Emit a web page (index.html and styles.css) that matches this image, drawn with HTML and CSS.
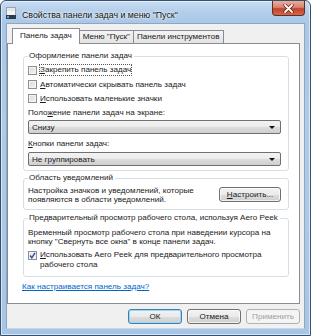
FILE: index.html
```html
<!DOCTYPE html>
<html lang="ru">
<head>
<meta charset="utf-8">
<link rel="stylesheet" href="styles.css">
</head>
<body>
<div class="window">
  <div class="titlebar">
    <svg class="app-icon" width="10" height="12" viewBox="0 0 10 12">
      <rect x="0.5" y="0.5" width="9" height="11" fill="#f4f4f4" stroke="#9aa4ae"/>
      <rect x="1" y="1" width="8" height="3" fill="#dfe7ef"/>
      <rect x="0" y="8" width="10" height="4" fill="#2d3a47"/>
      <rect x="1" y="9" width="2" height="2" fill="#6aa0d8"/>
    </svg>
    <span class="title">Свойства панели задач и меню "Пуск"</span>
    <div class="close">
      <svg width="11" height="9" viewBox="0 0 11 9">
        <path d="M2 1 L9 8 M9 1 L2 8" stroke="#5a1a10" stroke-width="3.2" stroke-linecap="round"/>
        <path d="M2 1 L9 8 M9 1 L2 8" stroke="#ffffff" stroke-width="1.8" stroke-linecap="round"/>
      </svg>
    </div>
  </div>
  <div class="client">
    <div class="tabs">
      <div class="tab active">Панель задач</div>
      <div class="tab">Меню "Пуск"</div>
      <div class="tab">Панели инструментов</div>
    </div>
    <div class="panel">
      <fieldset class="group g1">
        <legend>Оформление панели задач</legend>
        <div class="check"><span class="box"></span><span class="focus"><u>З</u>акрепить панель задач</span></div>
        <div class="check"><span class="box"></span><span><u>А</u>втоматически скрывать панель задач</span></div>
        <div class="check"><span class="box"></span><span><u>И</u>спользовать маленькие значки</span></div>
        <div class="caption">Поло<u>ж</u>ение панели задач на экране:</div>
        <div class="select"><span>Снизу</span><span class="arrow"></span></div>
        <div class="caption c2"><u>К</u>нопки панели задач:</div>
        <div class="select s2"><span>Не группировать</span><span class="arrow"></span></div>
      </fieldset>
      <fieldset class="group g2">
        <legend>Область уведомлений</legend>
        <div class="notify">
          <div class="desc">Настройка значков и уведомлений, которые<br>появляются в области уведомлений.</div>
          <div class="btn small"><u>Н</u>астроить...</div>
        </div>
      </fieldset>
      <fieldset class="group g3">
        <legend>Предварительный просмотр рабочего стола, используя Aero Peek</legend>
        <div class="desc">Временный просмотр рабочего стола при наведении курсора на<br>кнопку "Свернуть все окна" в конце панели задач.</div>
        <div class="check multi"><span class="box checked"><svg width="7" height="7" viewBox="0 0 7 7"><path d="M1 3.5 L2.8 5.8 L6 0.8" fill="none" stroke="#2a4f9a" stroke-width="1.4"/></svg></span><span><u>И</u>спользовать Aero Peek для предварительного просмотра<br>рабочего стола</span></div>
      </fieldset>
      <div class="link">Как настраивается панель задач?</div>
    </div>
    <div class="buttons">
      <div class="btn default">ОК</div>
      <div class="btn">Отмена</div>
      <div class="btn disabled">Применить</div>
    </div>
  </div>
</div>
</body>
</html>
```
FILE: styles.css
```css
html, body {
  margin: 0;
  padding: 0;
}
body {
  width: 311px;
  height: 336px;
  overflow: hidden;
  background: #ffffff;
  font-family: "Liberation Sans", Arial, sans-serif;
  font-size: 8.1px;
  color: #1a1a1a;
}
u { text-decoration: underline; }

.window {
  box-sizing: border-box;
  width: 311px;
  height: 336px;
  border: 1px solid #34506e;
  border-radius: 6px 6px 0 0;
  background: linear-gradient(to bottom, #c9def3 0px, #b4cfeb 10px, #a9c7e7 22px, #aecbe9 120px, #a7c5e6 336px);
  box-shadow: inset 0 0 0 1px rgba(255,255,255,0.55);
  display: flex;
  flex-direction: column;
  padding: 0 5px 6px 5px;
}

.titlebar {
  height: 22px;
  display: flex;
  align-items: flex-start;
  flex: none;
}
.app-icon {
  margin: 6px 0 0 0;
  flex: none;
}
.title {
  margin: 8px 0 0 6px;
  font-size: 8.8px;
  line-height: 12px;
  color: #111;
  text-shadow: 0 0 4px #fff, 0 0 2px #fff;
}
.close {
  margin-left: auto;
  width: 33px;
  height: 15px;
  box-sizing: border-box;
  border: 1px solid #6b2a20;
  border-top: none;
  border-radius: 0 0 4px 4px;
  background: linear-gradient(to bottom, #e9ae9e 0, #d9836e 45%, #c0432c 55%, #cf6a4c 100%);
  display: flex;
  align-items: center;
  justify-content: center;
}

.client {
  flex: 1;
  background: #f0f0f0;
  border: 1px solid #8ea6c0;
  border-bottom-color: #c8d8e8;
  display: flex;
  flex-direction: column;
  padding: 4px 4px 4px 0;
}

.tabs {
  display: flex;
  align-items: flex-end;
  height: 15px;
  padding-left: 5px;
  position: relative;
  z-index: 1;
}
.tab {
  height: 12px;
  line-height: 12px;
  padding: 0 3px;
  border: 1px solid #898c95;
  border-bottom: none;
  border-left: none;
  background: linear-gradient(to bottom, #f4f4f4, #e3e3e3);
  white-space: nowrap;
}
.tab.active {
  height: 15px;
  line-height: 14px;
  padding: 0 7px;
  border-left: 1px solid #898c95;
  background: #ffffff;
  margin-bottom: -1px;
  margin-right: -1px;
  position: relative;
  z-index: 2;
}
.tab.active + .tab { border-left: 1px solid #898c95; }

.panel {
  box-sizing: border-box;
  height: 261px;
  background: #ffffff;
  border: 1px solid #898c95;
  padding: 7px 10px 0 15px;
  display: flex;
  flex-direction: column;
}

.group {
  margin: 0;
  padding: 0 7px 4px 4px;
  border: 1px solid #d5dfe5;
  border-radius: 3px;
  min-width: 0;
}
.group legend {
  padding: 0 2px 0 1px;
  margin-left: 0;
  line-height: 10px;
  white-space: nowrap;
}
.g1 { padding-top: 2px; }
.g2 { margin-top: 2px; padding-bottom: 5px; padding-top: 0; }
.g3 { margin-top: 3px; padding-top: 5px; padding-bottom: 6px; }

.check {
  display: flex;
  align-items: center;
  height: 14px;
  white-space: nowrap;
}
.box {
  box-sizing: border-box;
  width: 9px;
  height: 9px;
  border: 1px solid #8e8f8f;
  background: linear-gradient(135deg, #d8d8d8, #f6f6f6);
  box-shadow: inset 0 0 0 1px #f4f4f4;
  margin-right: 3px;
  flex: none;
  display: flex;
  align-items: center;
  justify-content: center;
}
.box.checked {
  background: linear-gradient(135deg, #dfe4ea, #f8f9fb);
}
.focus {
  outline: 1px dotted #555;
  outline-offset: 0;
  line-height: 10px;
}
.check.multi {
  height: auto;
  align-items: flex-start;
  margin-top: 4px;
  line-height: 10px;
}
.check.multi .box { margin-top: 1px; }

.caption {
  height: 14px;
  line-height: 14px;
  margin-top: 1px;
}
.caption.c2 {
  margin-top: 4px;
  height: 12px;
  line-height: 12px;
}
.select {
  box-sizing: border-box;
  height: 14px;
  border: 1px solid #707070;
  border-radius: 2px;
  background: linear-gradient(to bottom, #f3f3f3 0, #ebebeb 50%, #dddddd 51%, #cfcfcf 100%);
  display: flex;
  align-items: center;
  justify-content: space-between;
  padding: 0 5px 0 3px;
}
.select.s2 { margin-top: 2px; }
.arrow {
  width: 0;
  height: 0;
  border-left: 3px solid transparent;
  border-right: 3px solid transparent;
  border-top: 3px solid #111;
}

.notify {
  display: flex;
  align-items: flex-start;
  justify-content: space-between;
}
.desc {
  line-height: 9px;
  white-space: nowrap;
  padding-top: 3px;
}
.g3 .desc { padding-top: 0; }

.btn {
  box-sizing: border-box;
  width: 54px;
  height: 15px;
  border: 1px solid #707070;
  border-radius: 3px;
  background: linear-gradient(to bottom, #f2f2f2 0, #ebebeb 50%, #dddddd 51%, #cfcfcf 100%);
  box-shadow: inset 0 0 0 1px rgba(255,255,255,0.7);
  display: flex;
  align-items: center;
  justify-content: center;
  white-space: nowrap;
}
.btn.small {
  width: 62px;
  margin-top: 4px;
}
.btn.default {
  border-color: #3c7fb1;
  box-shadow: inset 0 0 0 1px #9fd5f5;
}
.btn.disabled {
  color: #a0a0a0;
  border-color: #adb2b5;
  background: #f4f4f4;
  box-shadow: none;
}

.link {
  margin-top: 5px;
  margin-left: -1px;
  line-height: 10px;
  color: #0066cc;
  text-decoration: underline;
  white-space: nowrap;
}

.buttons {
  display: flex;
  justify-content: flex-end;
  gap: 5px;
  margin-top: 5px;
}
```
